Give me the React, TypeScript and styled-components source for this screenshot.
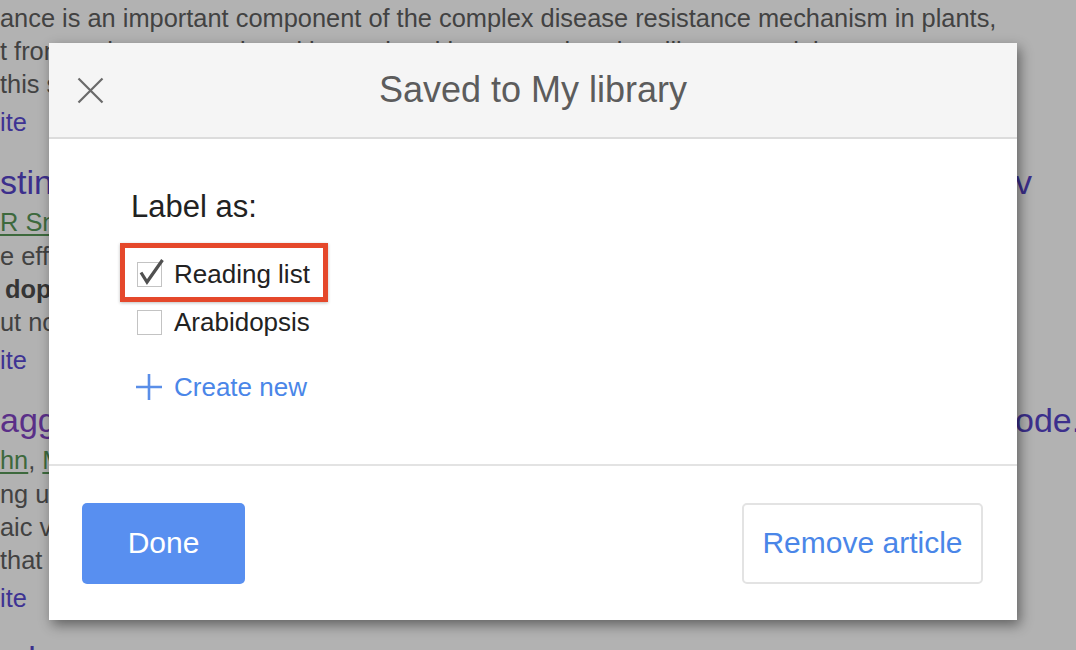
import React from "react";
import styled, { createGlobalStyle } from "styled-components";

const GlobalStyle = createGlobalStyle`
  html, body { margin: 0; padding: 0; }
  body {
    width: 1076px;
    height: 650px;
    overflow: hidden;
    background: #b2b2b2;
    font-family: "Liberation Sans", Arial, sans-serif;
  }
`;

const Page = styled.div`
  position: relative;
  width: 1076px;
  height: 650px;
  overflow: hidden;
  background: #b2b2b2;
`;

/* ---------- dimmed results page ---------- */

const Results = styled.div`
  display: flex;
  flex-direction: column;
  padding-top: 1px;
`;

const Result = styled.div`
  display: flex;
  flex-direction: column;
  & + & {
    margin-top: 23px;
  }
`;

const TitleRow = styled.div<{ $visited?: boolean }>`
  display: grid;
  grid-template-columns: 1015px max-content;
  height: 40px;
  font-size: 34px;
  line-height: 40px;
  white-space: nowrap;
  color: ${(p) => (p.$visited ? "#5a2f88" : "#3c2f8c")};
`;

const TitleTail = styled.span`
  color: #3c2f8c;
`;

const Authors = styled.div`
  margin-top: 4px;
  font-size: 25.4px;
  line-height: 33px;
  height: 33px;
  white-space: nowrap;
  color: #424242;
`;

const AuthorLink = styled.span`
  color: #3d693d;
  text-decoration: underline;
  text-underline-offset: 3px;
`;

const Snippet = styled.div`
  margin-top: 1px;
  display: flex;
  flex-direction: column;
`;

const Line = styled.div<{ $indent?: number }>`
  height: 33px;
  font-size: 25.4px;
  line-height: 33px;
  white-space: nowrap;
  color: #424242;
  padding-left: ${(p) => p.$indent ?? 0}px;
`;

const Bold = styled.b`
  color: #353535;
`;

const Cite = styled.div`
  margin-top: 5px;
  height: 33px;
  font-size: 25.4px;
  line-height: 33px;
  white-space: nowrap;
  color: #3e3393;
`;

/* ---------- dialog ---------- */

const Dialog = styled.div`
  position: absolute;
  left: 49px;
  top: 43px;
  width: 968px;
  height: 577px;
  background: #ffffff;
  display: flex;
  flex-direction: column;
  box-shadow: 3px 5px 12px rgba(0, 0, 0, 0.45);
`;

const Header = styled.div`
  box-sizing: border-box;
  height: 96px;
  background: #f5f5f5;
  border-bottom: 2px solid #dcdcdc;
  display: flex;
  align-items: center;
  padding: 0 28px;
`;

const CloseButton = styled.button`
  width: 27px;
  height: 27px;
  padding: 0;
  border: none;
  background: transparent;
  display: flex;
  align-items: center;
  justify-content: center;
  cursor: pointer;
`;

const Spacer = styled.div`
  width: 27px;
`;

const Title = styled.h1`
  flex: 1;
  margin: 0;
  text-align: center;
  font-size: 36px;
  font-weight: normal;
  color: #5c5c5c;
  line-height: 44px;
`;

const Body = styled.div`
  box-sizing: border-box;
  height: 327px;
  border-bottom: 2px solid #e3e3e3;
  padding: 50px 0 0 82px;
  display: flex;
  flex-direction: column;
  align-items: flex-start;
`;

const LabelHeading = styled.div`
  font-size: 31px;
  line-height: 36px;
  color: #222222;
`;

const Options = styled.div`
  margin-top: 29px;
  display: flex;
  flex-direction: column;
  align-items: flex-start;
  gap: 8px;
`;

const Option = styled.label<{ $highlight?: boolean }>`
  position: relative;
  display: flex;
  align-items: center;
  gap: 12px;
  height: 40px;
  padding-left: 6px;
  font-size: 26px;
  line-height: 40px;
  color: #222222;
  ${(p) =>
    p.$highlight &&
    `
    &::after {
      content: "";
      position: absolute;
      left: -11px;
      top: -11px;
      right: -18px;
      bottom: -8px;
      border: 5px solid #e5482b;
      box-shadow: 0 1px 3px rgba(0, 0, 0, 0.25);
      pointer-events: none;
    }
  `}
`;

const Box = styled.span`
  position: relative;
  box-sizing: border-box;
  width: 25px;
  height: 25px;
  border: 1.5px solid #c3c3c3;
  background: #ffffff;
  flex: none;
`;

const CheckMark = styled.svg`
  position: absolute;
  left: -1.5px;
  top: -1.5px;
  overflow: visible;
`;

const CreateNew = styled.div`
  margin-top: 25px;
  display: flex;
  align-items: center;
  gap: 12px;
  height: 40px;
  padding-left: 5px;
  font-size: 26px;
  line-height: 40px;
  color: #4a86e8;
`;

const Footer = styled.div`
  flex: 1;
  display: flex;
  align-items: center;
  justify-content: space-between;
  padding: 0 34px 0 33px;
`;

const Button = styled.button<{ $primary?: boolean }>`
  box-sizing: border-box;
  height: 81px;
  width: ${(p) => (p.$primary ? 163 : 241)}px;
  border-radius: 5px;
  font-family: "Liberation Sans", Arial, sans-serif;
  font-size: 30px;
  cursor: pointer;
  background: ${(p) => (p.$primary ? "#588ff0" : "#ffffff")};
  color: ${(p) => (p.$primary ? "#ffffff" : "#4a86e8")};
  border: ${(p) => (p.$primary ? "none" : "2px solid #e3e3e3")};
`;

const Check = () => (
  <CheckMark width="25" height="25" viewBox="0 0 25 25">
    <path d="M4 11.5 L10 21 L25.5 -1" fill="none" stroke="#505050" strokeWidth="3.2" strokeLinejoin="miter" />
  </CheckMark>
);

export default function App() {
  return (
    <>
      <GlobalStyle />
      <Page>
        <Results>
          <Result>
            <Snippet>
              <Line>ance is an important component of the complex disease resistance mechanism in plants,</Line>
              <Line>t from pathogen attack and is regulated by a complex signalling network in</Line>
              <Line>this study</Line>
            </Snippet>
            <Cite>ite</Cite>
          </Result>

          <Result>
            <TitleRow>
              <span>sting</span>
              <TitleTail>v</TitleTail>
            </TitleRow>
            <Authors>
              <AuthorLink>R Smith</AuthorLink>
            </Authors>
            <Snippet>
              <Line>e effects</Line>
              <Line $indent={5}>
                <Bold>dopsis</Bold>
              </Line>
              <Line>ut not</Line>
            </Snippet>
            <Cite>ite</Cite>
          </Result>

          <Result>
            <TitleRow $visited>
              <span>agging</span>
              <TitleTail>ode.com</TitleTail>
            </TitleRow>
            <Authors>
              <AuthorLink>hn</AuthorLink>, <AuthorLink>M</AuthorLink>
            </Authors>
            <Snippet>
              <Line>ng us</Line>
              <Line>aic vi</Line>
              <Line>that</Line>
            </Snippet>
            <Cite>ite</Cite>
          </Result>

          <Result>
            <TitleRow>
              <span>e lo</span>
            </TitleRow>
          </Result>
        </Results>

        <Dialog role="dialog" aria-label="Saved to My library">
          <Header>
            <CloseButton aria-label="Close">
              <svg width="27" height="27" viewBox="0 0 27 27">
                <path d="M1.5 1.5 L25.5 25.5 M25.5 1.5 L1.5 25.5" stroke="#6a6a6a" strokeWidth="2.2" fill="none" />
              </svg>
            </CloseButton>
            <Title>Saved to My library</Title>
            <Spacer />
          </Header>

          <Body>
            <LabelHeading>Label as:</LabelHeading>
            <Options>
              <Option $highlight>
                <Box>
                  <Check />
                </Box>
                Reading list
              </Option>
              <Option>
                <Box />
                Arabidopsis
              </Option>
            </Options>
            <CreateNew>
              <svg width="26" height="26" viewBox="0 0 26 26">
                <path d="M13 0 V26 M0 13 H26" stroke="#5a8ee8" strokeWidth="2.6" fill="none" />
              </svg>
              Create new
            </CreateNew>
          </Body>

          <Footer>
            <Button $primary>Done</Button>
            <Button>Remove article</Button>
          </Footer>
        </Dialog>
      </Page>
    </>
  );
}
